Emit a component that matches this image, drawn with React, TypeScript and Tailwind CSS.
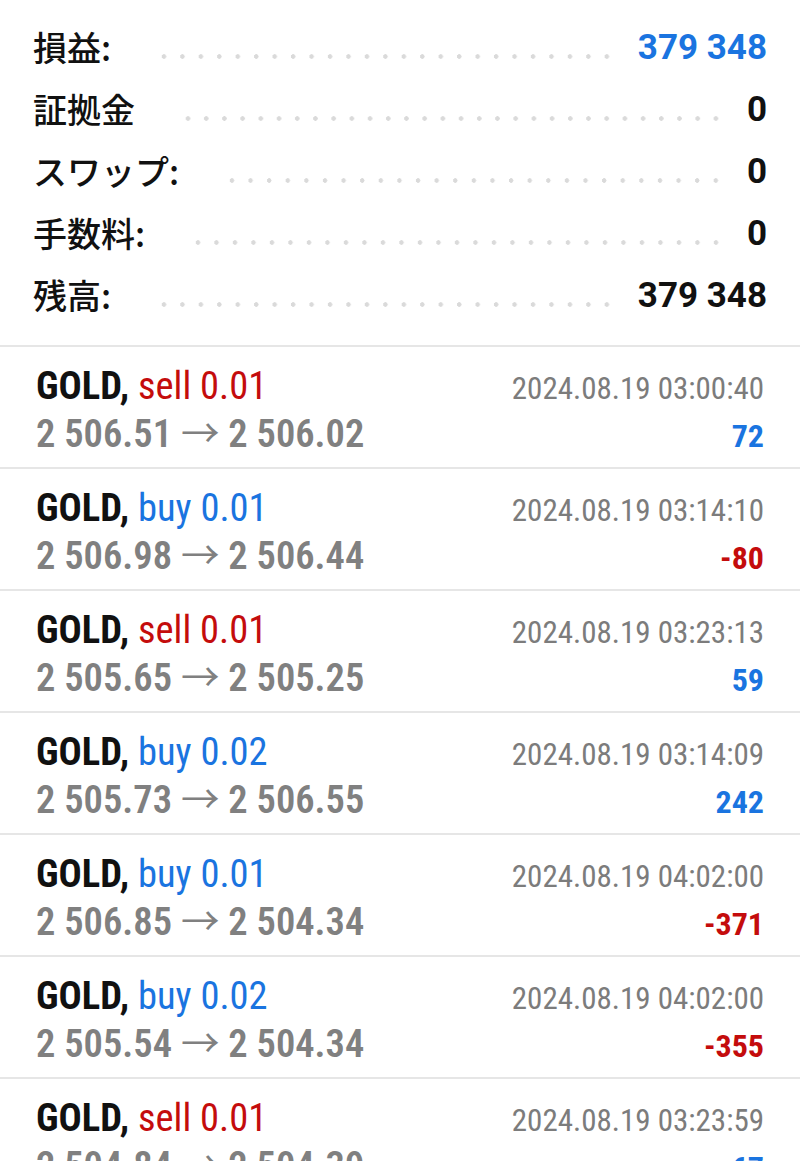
const summary = [
  { label: "損益:", value: "379 348", blue: true },
  { label: "証拠金", value: "0" },
  { label: "スワップ:", value: "0" },
  { label: "手数料:", value: "0" },
  { label: "残高:", value: "379 348" },
];

const trades = [
  { side: "sell", lot: "0.01", open: "2 506.51", close: "2 506.02", time: "2024.08.19 03:00:40", profit: "72" },
  { side: "buy", lot: "0.01", open: "2 506.98", close: "2 506.44", time: "2024.08.19 03:14:10", profit: "-80" },
  { side: "sell", lot: "0.01", open: "2 505.65", close: "2 505.25", time: "2024.08.19 03:23:13", profit: "59" },
  { side: "buy", lot: "0.02", open: "2 505.73", close: "2 506.55", time: "2024.08.19 03:14:09", profit: "242" },
  { side: "buy", lot: "0.01", open: "2 506.85", close: "2 504.34", time: "2024.08.19 04:02:00", profit: "-371" },
  { side: "buy", lot: "0.02", open: "2 505.54", close: "2 504.34", time: "2024.08.19 04:02:00", profit: "-355" },
  { side: "sell", lot: "0.01", open: "2 504.84", close: "2 504.39", time: "2024.08.19 03:23:59", profit: "67" },
];

const BLUE = "text-[#1a74e0]";
const RED = "text-[#c40c0c]";

function SummaryRow({ label, value, blue }: { label: string; value: string; blue?: boolean }) {
  return (
    <div className="flex h-[62px] items-center">
      <span className="text-[34px] font-medium leading-none text-[#111] font-['Noto_Sans_CJK_JP',sans-serif]">
        {label}
      </span>
      <div className="mt-[19px] ml-[44px] mr-[22px] h-[5px] flex-1 bg-[radial-gradient(circle,#dadada_2px,transparent_2.5px)] bg-[length:18px_5px] bg-repeat-space" />
      <span className={`text-[35px] font-bold leading-none font-['Roboto',sans-serif] ${blue ? BLUE : "text-[#111]"}`}>
        {value}
      </span>
    </div>
  );
}

function TradeRow({ t }: { t: (typeof trades)[number] }) {
  const sideColor = t.side === "buy" ? BLUE : RED;
  const profitColor = t.profit.startsWith("-") ? RED : BLUE;
  return (
    <div className="border-b-2 border-[#e6e6e6] px-[36px] pt-[16px] pb-[14px] font-['Roboto_Condensed',sans-serif]">
      <div className="flex h-[45px] items-baseline justify-between leading-[45px]">
        <span className="text-[38.5px]">
          <span className="font-bold text-[#111]">GOLD,</span>{" "}
          <span className={sideColor}>
            {t.side} {t.lot}
          </span>
        </span>
        <span className="text-[31px] text-[#7c7c7c]">{t.time}</span>
      </div>
      <div className="flex h-[45px] items-baseline justify-between leading-[45px]">
        <span className="text-[38.5px] font-semibold text-[#808080]">
          {t.open} <span className="font-['Noto_Sans_CJK_JP',sans-serif] font-normal">→</span> {t.close}
        </span>
        <span className={`text-[32px] font-bold ${profitColor}`}>{t.profit}</span>
      </div>
    </div>
  );
}

export default function App() {
  return (
    <div className="h-[1161px] w-[800px] overflow-hidden bg-white">
      <div className="px-[33px] pt-[16px] pb-[19px]">
        {summary.map((s) => (
          <SummaryRow key={s.label} {...s} />
        ))}
      </div>
      <div className="border-t-2 border-[#e6e6e6]">
        {trades.map((t, i) => (
          <TradeRow key={i} t={t} />
        ))}
      </div>
    </div>
  );
}
